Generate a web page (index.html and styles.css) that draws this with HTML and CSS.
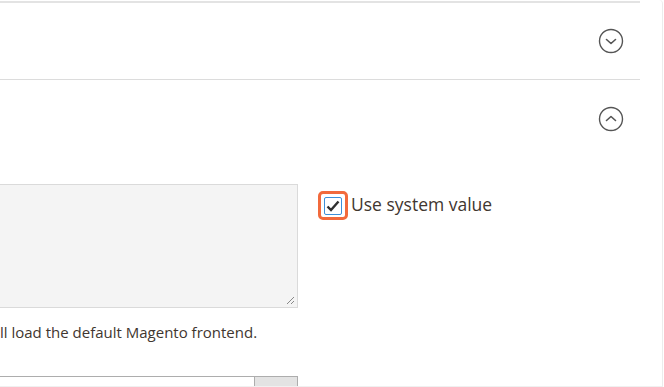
FILE: index.html
```html
<!DOCTYPE html>
<html lang="en">
<head>
    <meta charset="UTF-8">
    <title>Configuration</title>
    <link rel="stylesheet" href="styles.css">
</head>
<body>
    <div class="card">
        <div class="section">
            <div class="section-head">
                <svg class="toggle" width="26" height="26" viewBox="0 0 26 26">
                    <circle cx="13" cy="13" r="11.5" fill="none" stroke="#555" stroke-width="1.4"/>
                    <path d="M8.5 11.5 L13 15.5 L17.5 11.5" fill="none" stroke="#555" stroke-width="1.6" stroke-linecap="round" stroke-linejoin="round"/>
                </svg>
            </div>
        </div>

        <div class="section open">
            <div class="section-head">
                <svg class="toggle" width="26" height="26" viewBox="0 0 26 26">
                    <circle cx="13" cy="13" r="11.5" fill="none" stroke="#555" stroke-width="1.4"/>
                    <path d="M8.5 14.5 L13 10.5 L17.5 14.5" fill="none" stroke="#555" stroke-width="1.6" stroke-linecap="round" stroke-linejoin="round"/>
                </svg>
            </div>

            <div class="field-row">
                <div class="control">
                    <div class="textarea" aria-disabled="true">
                        <svg class="resize" width="10" height="10" viewBox="0 0 10 10">
                            <path d="M9 2 L2 9 M9 6 L6 9" stroke="#888" stroke-width="1"/>
                        </svg>
                    </div>
                    <p class="note">ll load the default Magento frontend.</p>
                </div>
                <label class="use-default">
                    <span class="check-ring">
                        <span class="check-box">
                            <svg width="14" height="12" viewBox="0 0 14 12">
                                <path d="M1.5 6.5 L5 10 L12.5 1.5" fill="none" stroke="#303030" stroke-width="2.4"/>
                            </svg>
                        </span>
                    </span>
                    <span class="label-text">Use system value</span>
                </label>
            </div>

            <div class="field-row next-field">
                <div class="input-group">
                    <div class="input"></div>
                    <div class="addon"></div>
                </div>
            </div>
        </div>
    </div>
</body>
</html>
```

FILE: styles.css
```css
body {
    margin: 0;
    background: #fff;
    font-family: "Open Sans", "Liberation Sans", sans-serif;
    color: #303030;
}

.card {
    width: 662px;
    height: 386px;
    border-right: 1px solid #ececec;
    border-bottom: 1px solid #f0f0f0;
    border-top-right-radius: 4px;
    overflow: hidden;
}

.section {
    width: 640px;
}

.section:first-child {
    margin-top: 1px;
    border-top: 2px solid #e3e3e3;
}

.section.open {
    border-top: 1px solid #dcdcdc;
}

.section-head {
    height: 76px;
    display: flex;
    align-items: center;
    justify-content: flex-end;
    padding-right: 16px;
}

.section.open .section-head {
    height: 78px;
}

.field-row {
    display: flex;
    align-items: flex-start;
    padding-top: 26px;
}

.control {
    width: 298px;
}

.textarea {
    position: relative;
    height: 122px;
    background: #f4f4f4;
    border: 1px solid #dadada;
    border-left: none;
}

.resize {
    position: absolute;
    right: 2px;
    bottom: 2px;
}

.note {
    margin: 14px 0 0;
    font-size: 15px;
    line-height: 20px;
    color: #41362f;
}

.use-default {
    display: flex;
    align-items: center;
    gap: 3px;
    margin: 7px 0 0 20px;
    font-size: 17.5px;
    color: #41362f;
}

.label-text {
    margin-bottom: 4px;
}

.check-ring {
    display: flex;
    align-items: center;
    justify-content: center;
    width: 24px;
    height: 23px;
    border: 3px solid #f26a3c;
    border-radius: 5px;
}

.check-box {
    display: flex;
    align-items: center;
    justify-content: center;
    width: 18px;
    height: 18px;
    border: 1px solid #3d8fd8;
    border-radius: 2px;
    background: #fff;
    box-sizing: border-box;
}

.next-field {
    padding-top: 34px;
}

.input-group {
    display: flex;
    width: 298px;
}

.input {
    flex: 1;
    height: 30px;
    border: 1px solid #adadad;
    border-left: none;
}

.addon {
    width: 42px;
    height: 30px;
    background: #e3e3e3;
    border: 1px solid #adadad;
    border-left: none;
}
```
